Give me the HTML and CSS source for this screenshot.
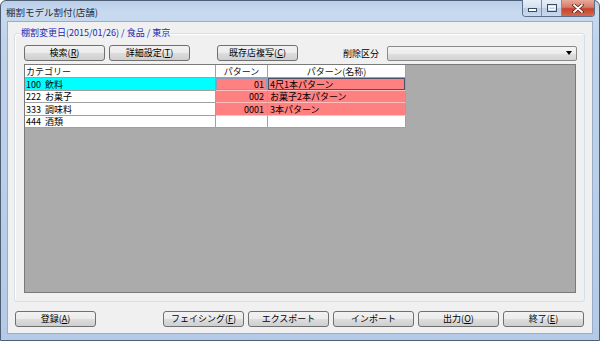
FILE: index.html
```html
<!DOCTYPE html>
<html lang="ja">
<head>
<meta charset="utf-8">
<link rel="stylesheet" href="styles.css">
</head>
<body>
<div class="window">
  <div class="titlebar">
    <span class="title">棚割モデル割付(店舗)</span>
    <div class="caption-buttons">
      <div class="cb cb-min"><svg width="9" height="4" viewBox="0 0 9 4"><rect x="0.5" y="0.5" width="8" height="3" fill="#fff" stroke="#3a4a60"/></svg></div>
      <div class="cb cb-max"><svg width="10" height="8" viewBox="0 0 10 8"><rect x="0.5" y="0.5" width="9" height="7" fill="none" stroke="#3a4a60"/><rect x="2" y="2.5" width="6" height="3" fill="none" stroke="#fff"/></svg></div>
      <div class="cb cb-close"><svg width="12" height="9" viewBox="0 0 12 9"><path d="M2 1 L10 8 M10 1 L2 8" stroke="#5a1a14" stroke-width="3.4" stroke-linecap="round"/><path d="M2 1 L10 8 M10 1 L2 8" stroke="#fff" stroke-width="1.8" stroke-linecap="round"/></svg></div>
    </div>
  </div>
  <div class="client">
    <div class="group">
      <span class="group-caption">棚割変更日(2015/01/26) / 食品 / 東京</span>
      <div class="toolbar">
        <button class="btn">検索(<u>R</u>)</button>
        <button class="btn btn-second">詳細設定(<u>T</u>)</button>
        <button class="btn btn-copy">既存店複写(<u>C</u>)</button>
        <span class="label">削除区分</span>
        <div class="combo"><span class="arrow"></span></div>
      </div>
      <div class="grid">
        <div class="table">
          <div class="hd hd-left">カテゴリー</div>
          <div class="hd">パターン</div>
          <div class="hd">パターン(名称)</div>

          <div class="cat sel">100&nbsp;&nbsp;飲料</div>
          <div class="pat num cur">01</div>
          <div class="pat name focus">4尺1本パターン</div>

          <div class="cat">222&nbsp;&nbsp;お菓子</div>
          <div class="pat num">002</div>
          <div class="pat name">お菓子2本パターン</div>

          <div class="cat">333&nbsp;&nbsp;調味料</div>
          <div class="pat num">0001</div>
          <div class="pat name">3本パターン</div>

          <div class="cat">444&nbsp;&nbsp;酒類</div>
          <div class="blank"></div>
          <div class="blank"></div>
        </div>
      </div>
    </div>
    <div class="footer">
      <button class="btn">登録(<u>A</u>)</button>
      <button class="btn push">フェイシング(<u>F</u>)</button>
      <button class="btn">エクスポート</button>
      <button class="btn">インポート</button>
      <button class="btn">出力(<u>O</u>)</button>
      <button class="btn">終了(<u>E</u>)</button>
    </div>
  </div>
</div>
</body>
</html>
```

FILE: styles.css
```css
* { box-sizing: border-box; }
html, body { margin: 0; padding: 0; }
body {
  width: 600px;
  height: 341px;
  overflow: hidden;
  font-family: "Noto Sans CJK JP", "Noto Sans", sans-serif;
  font-size: 9px;
  color: #000;
  background: #fff;
}
.window {
  width: 600px;
  height: 341px;
  display: flex;
  flex-direction: column;
  background: linear-gradient(to bottom, #b9cfe9 0px, #c8daef 12px, #bfd3eb 40px, #b4cae6 100%);
  border: 1px solid #4d5e75;
  border-radius: 6px 6px 0 0;
  padding: 0 6px 6px;
}
.titlebar {
  height: 20px;
  display: flex;
  align-items: flex-start;
}
.title {
  padding-top: 4px;
  margin-left: -1px;
  font-size: 9.5px;
  color: #1e2a3a;
}
.caption-buttons {
  margin-left: auto;
  margin-right: -2px;
  margin-top: -1px;
  display: flex;
  height: 17px;
  border: 1px solid #5f6f86;
  border-top: none;
  border-radius: 0 0 4px 4px;
  overflow: hidden;
}
.cb {
  display: flex;
  align-items: center;
  justify-content: center;
  height: 100%;
}
.cb-min, .cb-max {
  background: linear-gradient(to bottom, #e6eef8 0%, #d3e0f0 50%, #bccde4 51%, #c9d9ee 100%);
  border-right: 1px solid #7d8da4;
}
.cb-min { width: 19px; padding-top: 4px; }
.cb-max { width: 20px; }
.cb-close {
  width: 32px;
  background: linear-gradient(to bottom, #e8a99c 0%, #d77b69 45%, #c7432f 55%, #d4684c 100%);
}
.client {
  flex: 1;
  background: #f0f0f0;
  border: 1px solid #99adc6;
  padding: 11px 7px 0 6px;
  display: flex;
  flex-direction: column;
}
.group {
  position: relative;
  width: 571px;
  height: 269px;
  border: 1px solid #d5dfe5;
  border-radius: 3px;
  box-shadow: inset 1px 1px 0 #fff;
  padding: 11px 0 0 9px;
}
.group-caption {
  position: absolute;
  left: 5px;
  top: -7px;
  padding: 0 1px;
  background: #f0f0f0;
  color: #1a28b4;
  line-height: 12px;
}
.toolbar {
  display: flex;
  align-items: center;
  height: 16px;
}
.btn {
  width: 81px;
  height: 16px;
  padding: 0;
  border: 1px solid #707070;
  border-radius: 3px;
  background: linear-gradient(to bottom, #f2f2f2 0%, #ebebeb 50%, #dddddd 51%, #cfcfcf 100%);
  font-family: inherit;
  font-size: 9px;
  color: #000;
  display: flex;
  align-items: center;
  justify-content: center;
  line-height: 12px;
  flex: none;
}
.btn u { text-decoration: underline; text-underline-offset: 1px; }
.btn-second { margin-left: 4px; }
.btn-copy { margin-left: 27px; }
.label { margin-left: 45px; width: 36px; white-space: nowrap; }
.combo {
  margin-left: 8px;
  width: 190px;
  height: 15px;
  border: 1px solid #8a8a8a;
  border-radius: 2px;
  background: linear-gradient(to bottom, #f4f4f4 0%, #ececec 50%, #dfdfdf 51%, #d4d4d4 100%);
  display: flex;
  align-items: center;
  justify-content: flex-end;
  padding-right: 4px;
}
.arrow {
  width: 0;
  height: 0;
  border-left: 3px solid transparent;
  border-right: 3px solid transparent;
  border-top: 4px solid #000;
}
.grid {
  margin-top: 3px;
  width: 552px;
  height: 229px;
  border: 1px solid #7a7a7a;
  background: #ababab;
}
.table {
  display: grid;
  grid-template-columns: 191px 52px 138px;
  grid-template-rows: 13px 13px 12px 13px 12px;
  width: 381px;
  line-height: 11px;
}
.table > div {
  border-right: 1px solid #a0a0a0;
  border-bottom: 1px solid #a0a0a0;
  white-space: nowrap;
  overflow: hidden;
  display: flex;
  align-items: center;
}
.hd {
  background: #fff;
  justify-content: center;
  color: #111;
}
.hd-left { justify-content: flex-start; padding-left: 1px; }
.cat { background: #fff; padding-left: 1px; }
.cat.sel { background: #00ffff; }
.pat {
  background: #ff8080;
  border-bottom-color: #ffc0c0 !important;
}
.num { justify-content: flex-end; padding-right: 3px; }
.name { padding-left: 2px; }
.cur { box-shadow: inset 0 0 0 1px #8c9cb8; }
.focus { box-shadow: inset 0 0 0 1px #4a5366; }
.blank { background: #fff; }
.footer {
  display: flex;
  margin-top: 9px;
  margin-left: 1px;
}
.footer .btn + .btn { margin-left: 4px; }
.footer .btn.push { margin-left: 67px; }
```
